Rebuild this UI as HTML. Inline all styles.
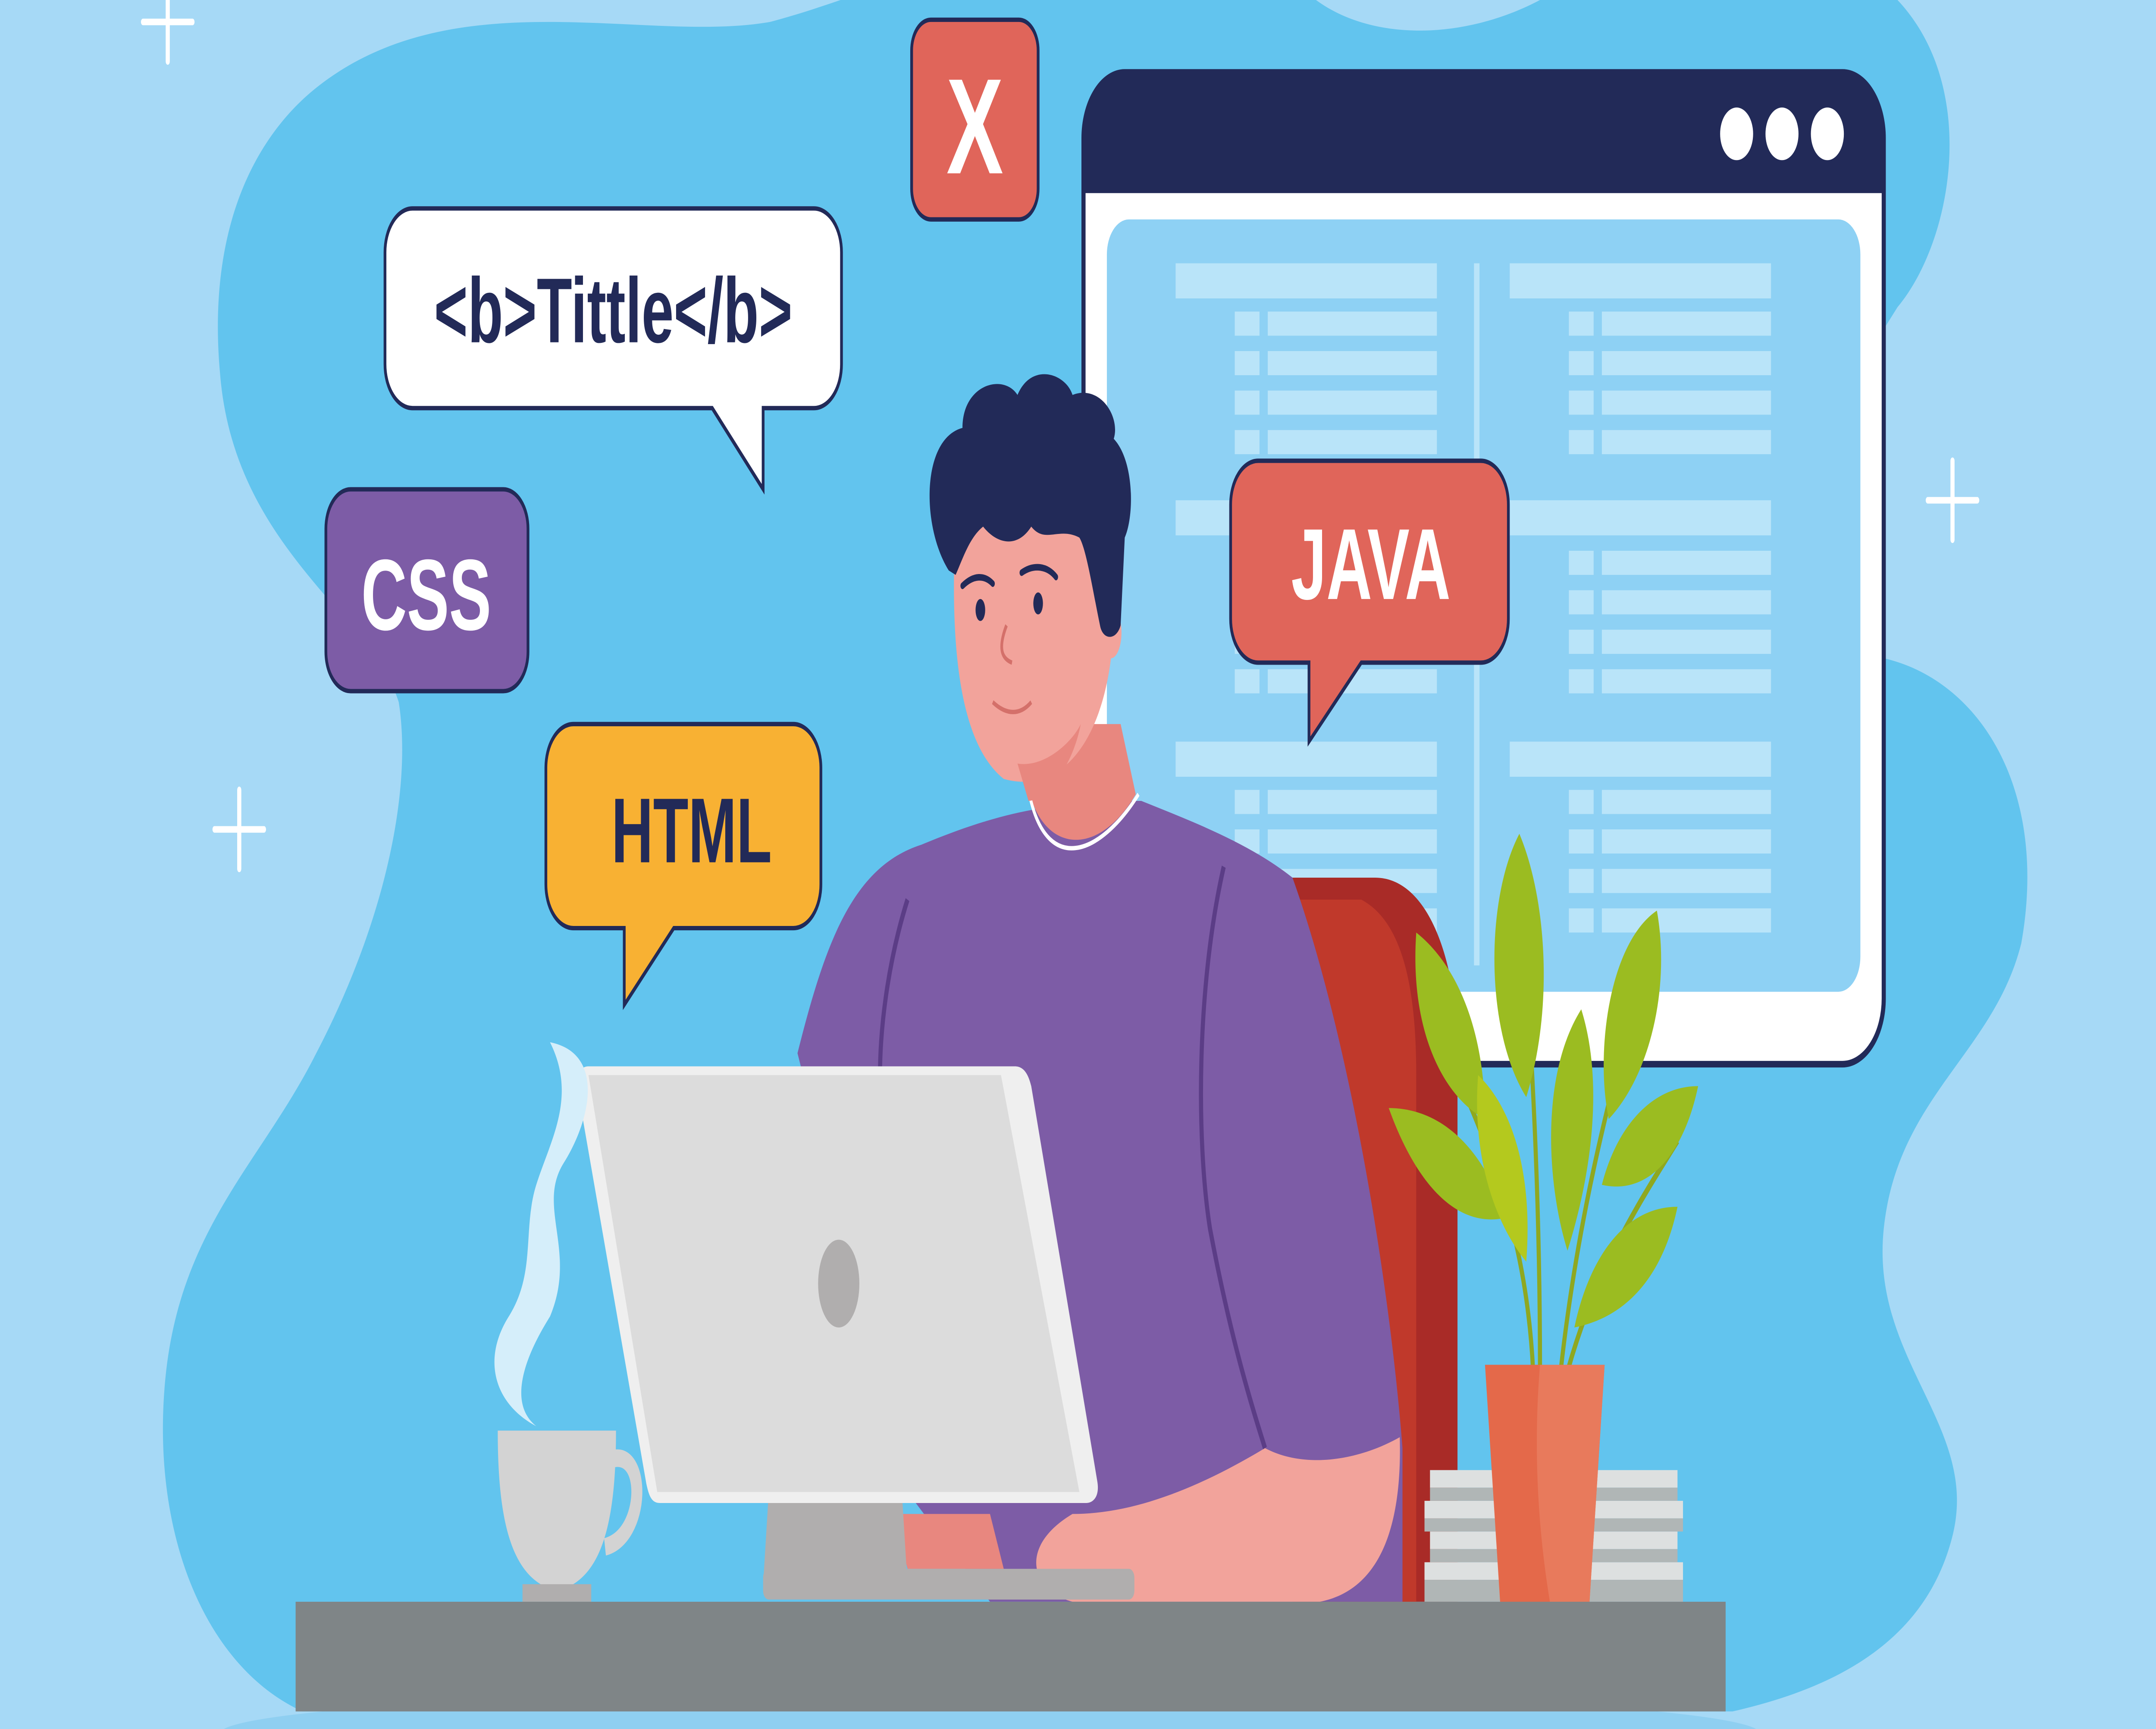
<!DOCTYPE html>
<html><head><meta charset="utf-8"><style>
html,body{margin:0;padding:0;width:100%;height:100%;overflow:hidden;background:#a6d9f6}
svg{display:block;position:absolute;left:0;top:0;width:100vw;height:100vh}
text{font-family:"Liberation Sans",sans-serif;font-weight:bold}
</style></head><body>
<svg viewBox="0 0 1568 788" preserveAspectRatio="none">
<rect width="1568" height="788" fill="#a6d9f6"/>
<path d="M230 40 C330 -10 470 20 560 10 C620 0 640 -10 700 -10 L940 -10 C980 20 1060 20 1120 0 L1380 0 C1440 40 1420 110 1380 140 L1360 160 L1370 300 C1440 310 1490 360 1470 430 C1450 480 1380 500 1370 560 C1360 620 1440 650 1420 700 C1400 750 1330 770 1260 780 L220 780 C150 760 110 700 120 630 C130 560 190 530 230 480 C280 420 300 360 290 320 C270 280 170 250 160 170 C150 100 190 60 230 40Z" fill="#62c4ee"/>
<ellipse cx="720" cy="790" rx="560" ry="20" fill="#8fcff1"/>
<g stroke="#fff" stroke-width="3" stroke-linecap="round">
<path d="M122 0 V28 M104 10 H140"/><path d="M174 360 V396 M156 378 H192"/><path d="M1420 210 V246 M1402 228 H1438"/>
</g>
<rect x="788" y="33" width="582" height="452" rx="30" fill="#fff" stroke="#222a58" stroke-width="3"/>
<path d="M788 63 a30 30 0 0 1 30 -30 H1340 a30 30 0 0 1 30 30 V88 H788Z" fill="#222a58"/>
<circle cx="1263" cy="61" r="12" fill="#fff"/><circle cx="1296" cy="61" r="12" fill="#fff"/><circle cx="1329" cy="61" r="12" fill="#fff"/>
<rect x="805" y="100" width="548" height="352" rx="16" fill="#8ed1f4"/>
<g fill="#b9e4f9">
<rect x="855" y="120" width="190" height="16"/><rect x="1098" y="120" width="190" height="16"/>
<rect x="1072" y="120" width="4" height="320"/>
<rect x="855" y="228" width="190" height="16"/><rect x="1098" y="228" width="190" height="16"/>
<rect x="855" y="338" width="190" height="16"/><rect x="1098" y="338" width="190" height="16"/>
</g>
<g fill="#b9e4f9" id="rows">
<rect x="898" y="142" width="18" height="11"/><rect x="922" y="142" width="123" height="11"/>
<rect x="898" y="160" width="18" height="11"/><rect x="922" y="160" width="123" height="11"/>
<rect x="898" y="178" width="18" height="11"/><rect x="922" y="178" width="123" height="11"/>
<rect x="898" y="196" width="18" height="11"/><rect x="922" y="196" width="123" height="11"/>
<rect x="1141" y="142" width="18" height="11"/><rect x="1165" y="142" width="123" height="11"/>
<rect x="1141" y="160" width="18" height="11"/><rect x="1165" y="160" width="123" height="11"/>
<rect x="1141" y="178" width="18" height="11"/><rect x="1165" y="178" width="123" height="11"/>
<rect x="1141" y="196" width="18" height="11"/><rect x="1165" y="196" width="123" height="11"/>
</g>
<use href="#rows" y="109"/><use href="#rows" y="218"/>
<path d="M930 400 H1000 C1040 400 1060 440 1060 480 V730 H940Z" fill="#a92b27"/>
<path d="M930 410 H990 C1020 420 1030 450 1030 490 V730 H940Z" fill="#c0392b"/>
<path d="M580 480 C600 430 620 395 670 385 C720 372 760 365 830 365 C870 375 910 385 940 400 C980 470 1010 580 1020 660 L1020 730 L720 730 L660 680 Z" fill="#7d5ca6"/>
<path d="M660 410 C645 440 640 470 640 490 M890 395 C870 450 870 520 880 560 C895 610 910 640 920 660" stroke="#5b3d86" stroke-width="3" fill="none"/>
<path d="M920 660 C950 670 990 665 1018 655 C1020 700 1000 725 960 730 H780 C750 725 740 705 780 690 C830 690 880 675 920 660Z" fill="#f2a39b"/>
<path d="M650 690 H720 L730 715 H660Z" fill="#e8877f"/>
<path d="M748 360 C760 390 800 390 826 362 L815 330 H750Z" fill="#e8877f"/>
<path d="M748 360 C760 400 800 390 828 362" stroke="#fff" stroke-width="2" fill="none"/>
<path d="M695 240 C690 300 700 340 730 355 C770 362 800 340 808 300 C815 300 820 285 810 275 L815 230 C780 215 720 215 695 240Z" fill="#f2a39b"/>
<path d="M740 348 C760 350 780 338 786 330 C780 350 760 365 748 365Z" fill="#e8877f"/>
<path d="M690 260 C670 240 670 200 700 195 C700 175 730 170 740 180 C750 165 775 170 780 180 C800 175 815 190 810 200 C825 210 825 235 818 245 L815 285 C812 292 802 292 800 285 C795 270 790 250 785 245 C770 240 760 248 750 240 C740 250 725 248 715 240 C705 245 700 255 695 262Z" fill="#222a58"/>
<path d="M700 267 C708 262 716 262 722 266 M743 261 C752 257 762 258 768 263" stroke="#222a58" stroke-width="3" fill="none" stroke-linecap="round"/>
<ellipse cx="713" cy="278" rx="3.5" ry="5" fill="#222a58"/><ellipse cx="755" cy="275" rx="3.5" ry="5" fill="#222a58"/>
<path d="M722 320 C732 326 742 326 750 320 M732 285 C726 295 728 300 736 302" stroke="#d4706a" stroke-width="2" fill="none"/>
<path d="M563 640 H652 L660 722 H555Z" fill="#b0aeae"/>
<rect x="555" y="715" width="270" height="14" rx="4" fill="#b0aeae"/>
<path d="M428 486 H738 C745 486 748 490 750 495 L798 675 C800 682 795 685 790 685 H480 C474 685 472 682 470 676 L420 496 C418 490 422 486 428 486Z" fill="#efefef"/>
<path d="M428 490 H728 L785 680 H478Z" fill="#dcdcdc"/>
<ellipse cx="610" cy="585" rx="15" ry="20" fill="#b0aeae"/>
<path d="M400 475 C440 480 430 510 410 530 C390 550 420 570 400 600 C380 620 370 640 390 650 C360 640 350 620 370 600 C390 580 380 560 390 540 C400 520 420 500 400 475Z" fill="#d5eefa"/>
<path d="M362 652 H448 C448 690 440 720 405 725 C370 720 362 690 362 652Z" fill="#d3d3d3"/>
<path d="M445 665 C470 660 470 700 440 705" stroke="#d3d3d3" stroke-width="8" fill="none"/>
<rect x="380" y="722" width="50" height="8" fill="#b0aeae"/>
<g fill="#dde0e0"><rect x="1040" y="670" width="180" height="8"/><rect x="1036" y="684" width="188" height="8"/><rect x="1040" y="698" width="180" height="8"/><rect x="1036" y="712" width="188" height="8"/></g>
<g fill="#b0b6b6"><rect x="1040" y="678" width="180" height="6"/><rect x="1036" y="692" width="188" height="6"/><rect x="1040" y="706" width="180" height="6"/><rect x="1036" y="720" width="188" height="10"/></g>
<g stroke="#8fa820" stroke-width="3" fill="none"><path d="M1115 625 C1110 560 1080 520 1060 490 M1120 625 C1120 520 1110 450 1105 390 M1135 625 C1150 540 1180 480 1200 430 M1140 625 C1160 580 1190 550 1220 520"/></g>
<g fill="#9bbc21">
<path d="M1105 380 C1080 410 1080 470 1110 500 C1130 460 1125 410 1105 380Z"/>
<path d="M1205 415 C1170 430 1160 480 1170 510 C1200 490 1215 450 1205 415Z"/>
<path d="M1030 425 C1025 470 1050 500 1080 510 C1080 470 1060 440 1030 425Z"/>
<path d="M1235 495 C1200 495 1175 515 1165 540 C1200 545 1225 525 1235 495Z"/>
<path d="M1010 505 C1030 540 1060 560 1095 555 C1080 525 1050 505 1010 505Z"/>
<path d="M1220 550 C1180 550 1155 575 1145 605 C1185 600 1210 580 1220 550Z"/>
<path d="M1150 460 C1120 490 1125 540 1140 570 C1160 530 1165 490 1150 460Z"/>
<path d="M1075 490 C1070 530 1090 560 1110 575 C1115 535 1100 505 1075 490Z" fill="#b4c91e"/>
</g>
<path d="M1080 622 H1167 L1155 740 H1092Z" fill="#e4694a"/>
<path d="M1120 622 H1167 L1155 740 H1130 C1118 700 1115 660 1120 622Z" fill="#e87a5c"/>
<rect x="215" y="730" width="1040" height="50" fill="#7f8587"/>
<g stroke="#222a58" stroke-width="2">
<path d="M300 95 H592 a20 20 0 0 1 20 20 V166 a20 20 0 0 1 -20 20 H555 V223 L518 186 H300 a20 20 0 0 1 -20 -20 V115 a20 20 0 0 1 20 -20Z" fill="#fff"/>
<rect x="237" y="223" width="147" height="92" rx="18" fill="#7d5ca6"/>
<path d="M417 330 H577 a20 20 0 0 1 20 20 V403 a20 20 0 0 1 -20 20 H490 L454 458 V423 H417 a20 20 0 0 1 -20 -20 V350 a20 20 0 0 1 20 -20Z" fill="#f8b133"/>
<path d="M915 210 H1077 a20 20 0 0 1 20 20 V282 a20 20 0 0 1 -20 20 H990 L952 338 V302 H915 a20 20 0 0 1 -20 -20 V230 a20 20 0 0 1 20 -20Z" fill="#e0655a"/>
<rect x="663" y="9" width="92" height="91" rx="14" fill="#e0655a"/>
</g>
<text x="446" y="156" font-size="42" fill="#222a58" text-anchor="middle">&lt;b&gt;Tittle&lt;/b&gt;</text>
<text x="310" y="287" font-size="46" fill="#fff" text-anchor="middle">CSS</text>
<text x="503" y="393" font-size="42" fill="#222a58" text-anchor="middle">HTML</text>
<text x="997" y="273" font-size="46" fill="#fff" text-anchor="middle">JAVA</text>
<text x="709" y="79" font-size="62" fill="#fff" text-anchor="middle">X</text>
</svg>
</body></html>
